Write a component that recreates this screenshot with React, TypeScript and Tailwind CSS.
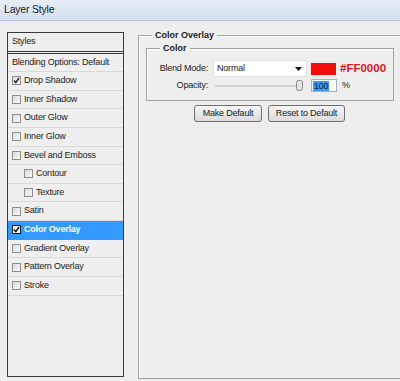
import React from "react";

function Check({ checked, hl }: { checked?: boolean; hl?: boolean }) {
  return (
    <span
      className={`flex h-[9px] w-[9px] shrink-0 items-center justify-center border ${
        hl ? "border-[#1a1a1a] bg-white" : "border-[#8f8f8f] bg-gradient-to-br from-[#dcdcdc] to-[#f8f8f8]"
      }`}
    >
      {checked && (
        <svg width="7" height="7" viewBox="0 0 7 7">
          <path d="M1 3.5 L2.8 5.6 L6 1" fill="none" stroke={hl ? "#000" : "#222"} strokeWidth="1.4" />
        </svg>
      )}
    </span>
  );
}

const items: { label: string; checked?: boolean; sub?: boolean; hl?: boolean }[] = [
  { label: "Drop Shadow", checked: true },
  { label: "Inner Shadow" },
  { label: "Outer Glow" },
  { label: "Inner Glow" },
  { label: "Bevel and Emboss" },
  { label: "Contour", sub: true },
  { label: "Texture", sub: true },
  { label: "Satin" },
  { label: "Color Overlay", checked: true, hl: true },
  { label: "Gradient Overlay" },
  { label: "Pattern Overlay" },
  { label: "Stroke" },
];

export default function App() {
  return (
    <div className="h-[381px] w-[400px] overflow-hidden bg-[#eeeeee] font-['Liberation_Sans',Arial,sans-serif] text-[#1a1a1a]">
      <div className="flex h-[21px] items-center border-b border-[#b8c8dc] bg-gradient-to-b from-[#e6eef8] to-[#d4e0ef] pl-[4px] text-[10.5px] tracking-[-0.2px]">
        Layer Style
      </div>
      <div className="flex items-start pl-[7px] pt-[11px]">
        {/* Left list */}
        <div className="flex h-[345px] w-[117px] shrink-0 flex-col border border-[#3a3a3a] bg-[#efefef] text-[9px] tracking-[-0.2px]">
          <div className="flex h-[19px] items-center border-b border-[#3a3a3a] pl-[4px]">Styles</div>
          <div className="mt-[1px] flex h-[19px] items-center border-t border-b border-[#3a3a3a] border-b-[#d8d8d8] pl-[4px]">
            Blending Options: Default
          </div>
          {items.map((it) => (
            <div
              key={it.label}
              className={`flex h-[18.64px] items-center gap-[3px] border-b ${
                it.hl ? "border-[#3399ff] bg-[#3399ff] font-bold text-white" : "border-[#dadada]"
              } ${it.sub ? "pl-[16px]" : "pl-[4px]"}`}
            >
              <Check checked={it.checked} hl={it.hl} />
              <span>{it.label}</span>
            </div>
          ))}
        </div>

        {/* Right panel */}
        <fieldset className="ml-[14px] mt-[-2px] h-[349px] w-[270px] shrink-0 border border-[#a3a3a3] shadow-[inset_1px_1px_0_#ffffff]">
          <legend className="ml-[13px] px-[3px] text-[9px] font-bold leading-[11px]">Color Overlay</legend>
          <fieldset className="ml-[7px] mt-[2px] w-[248px] border border-[#a3a3a3] pb-[8px] shadow-[inset_1px_1px_0_#ffffff]">
            <legend className="ml-[13px] px-[3px] text-[9px] font-bold leading-[11px]">Color</legend>
            <div className="mt-[6px] flex h-[17px] items-center text-[9px] tracking-[-0.2px]">
              <span className="w-[61px] text-right">Blend Mode:</span>
              <div className="ml-[5px] flex h-[17px] w-[94px] items-center justify-between border border-[#e2e2e2] bg-white pl-[3px] pr-[4px]">
                <span>Normal</span>
                <svg width="7" height="4" viewBox="0 0 7 4">
                  <path d="M0 0 H7 L3.5 4 Z" fill="#111" />
                </svg>
              </div>
              <span className="ml-[4px] h-[12px] w-[25px] bg-[#f20c0c]" />
              <span className="ml-[4px] text-[11.5px] font-bold tracking-normal text-[#e3141c]">#FF0000</span>
            </div>
            <div className="mt-[2px] flex h-[13px] items-center text-[9px] tracking-[-0.2px]">
              <span className="w-[61px] text-right">Opacity:</span>
              <svg className="ml-[7px]" width="88" height="13" viewBox="0 0 88 13">
                <line x1="0" y1="7" x2="84" y2="7" stroke="#b5b5b5" strokeWidth="1" />
                <rect x="81.5" y="1.5" width="6" height="10" rx="2" fill="#e4e4e4" stroke="#8a8a8a" />
              </svg>
              <div className="ml-[8px] flex h-[13px] w-[26px] items-center border border-[#9fb3cf] bg-white pl-[1px]">
                <span className="bg-[#3399ff] px-[1px] leading-[10px] text-[#202020]">100</span>
              </div>
              <span className="ml-[5px]">%</span>
            </div>
          </fieldset>
          <div className="mt-[4px] flex gap-[6px] pl-[55px] text-[9px] tracking-[-0.2px]">
            <button className="flex h-[17px] w-[68px] items-center justify-center rounded-[3px] border border-[#6f6f6f] bg-gradient-to-b from-[#f6f6f6] to-[#dcdcdc]">
              Make Default
            </button>
            <button className="flex h-[17px] w-[77px] items-center justify-center rounded-[3px] border border-[#6f6f6f] bg-gradient-to-b from-[#f6f6f6] to-[#dcdcdc]">
              Reset to Default
            </button>
          </div>
        </fieldset>
      </div>
    </div>
  );
}
